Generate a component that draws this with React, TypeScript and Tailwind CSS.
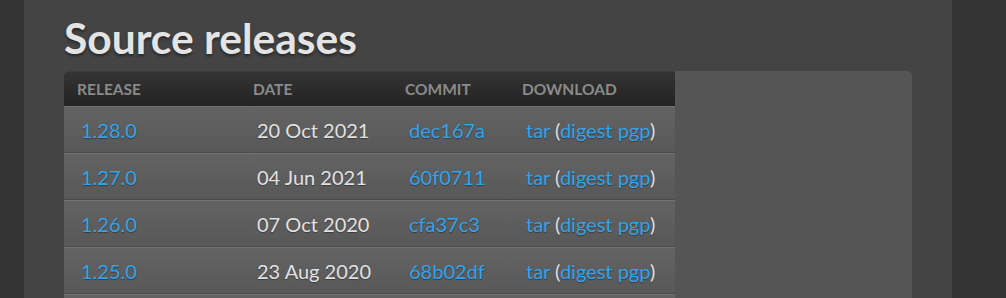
const releases = [
  { version: "1.28.0", date: "20 Oct 2021", commit: "dec167a" },
  { version: "1.27.0", date: "04 Jun 2021", commit: "60f0711" },
  { version: "1.26.0", date: "07 Oct 2020", commit: "cfa37c3" },
  { version: "1.25.0", date: "23 Aug 2020", commit: "68b02df" },
];

const link = "text-[#33a4ec] [text-shadow:0_1px_1px_rgba(0,0,0,0.35)]";

export default function App() {
  return (
    <div className="h-[298px] overflow-hidden bg-[#333333] font-['Lato',sans-serif]">
      <main className="ml-6 w-[928px] h-full bg-[#444444] px-10 pt-3">
        <h1 className="text-[42.5px] leading-[52px] font-bold text-[#e4e4e4] [text-shadow:0_2px_3px_rgba(0,0,0,0.45)]">
          Source releases
        </h1>
        <section className="mt-[7px] w-[848px] rounded-t-[5px] bg-[#555555] h-[300px]">
          <div className="w-[611px]">
            <div className="grid grid-cols-[176px_152px_117px_166px] h-[35px] items-center rounded-tl-[5px] border-t border-[#3c3c3c] bg-gradient-to-b from-[#343434] to-[#232323] pl-[13px] pt-px text-[15.5px] font-bold uppercase text-[#8a8a8a]">
              <span>Release</span>
              <span>Date</span>
              <span>Commit</span>
              <span>Download</span>
            </div>
            {releases.map((r) => (
              <div
                key={r.version}
                className="grid grid-cols-[176px_152px_117px_166px] h-[47px] items-center border-t border-[#727272] border-b border-b-[#4a4a4a] bg-gradient-to-b from-[#636363] to-[#585858] pl-[17px] text-[20px]"
              >
                <a className={link}>{r.version}</a>
                <span className="text-[#e2e2e2] [text-shadow:0_1px_1px_rgba(0,0,0,0.35)]">{r.date}</span>
                <a className={link}>{r.commit}</a>
                <span className="text-[#e2e2e2] [text-shadow:0_1px_1px_rgba(0,0,0,0.35)]">
                  <a className={link}>tar</a> (<a className={link}>digest</a> <a className={link}>pgp</a>)
                </span>
              </div>
            ))}
            <div className="h-[47px] border-t border-[#727272] bg-gradient-to-b from-[#636363] to-[#585858]" />
          </div>
        </section>
      </main>
    </div>
  );
}
